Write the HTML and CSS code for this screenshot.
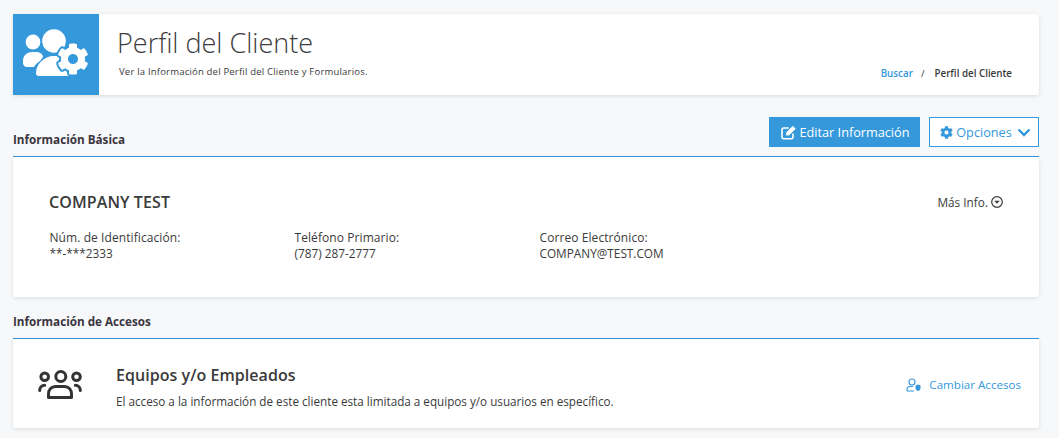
FILE: index.html
```html
<!DOCTYPE html>
<html lang="es">
<head>
<meta charset="utf-8">
<title>Perfil del Cliente</title>
<link rel="stylesheet" href="styles.css">
</head>
<body>
<svg class="defs" width="0" height="0" aria-hidden="true"><defs>
<path id="cog" d="M487.4 315.7l-42.6-24.6c4.3-23.2 4.3-47 0-70.2l42.6-24.6c4.9-2.8 7.1-8.6 5.5-14-11.1-35.6-30-67.8-54.7-94.6-3.8-4.1-10-5.1-14.8-2.3L380.8 110c-17.9-15.4-38.5-27.3-60.8-35.1V25.8c0-5.6-3.9-10.5-9.4-11.7-36.7-8.2-74.3-7.8-109.2 0-5.5 1.2-9.4 6.1-9.4 11.7V75c-22.2 7.9-42.8 19.8-60.8 35.1L88.7 85.5c-4.9-2.8-11-1.9-14.8 2.3-24.7 26.7-43.6 58.9-54.7 94.6-1.7 5.4.6 11.2 5.5 14L67.3 221c-4.3 23.2-4.3 47 0 70.2l-42.6 24.6c-4.9 2.8-7.1 8.6-5.5 14 11.1 35.6 30 67.8 54.7 94.6 3.8 4.1 10 5.1 14.8 2.3l42.6-24.6c17.9 15.4 38.5 27.3 60.8 35.1v49.2c0 5.6 3.9 10.5 9.4 11.7 36.7 8.2 74.3 7.8 109.2 0 5.5-1.2 9.4-6.1 9.4-11.7v-49.2c22.2-7.9 42.8-19.8 60.8-35.1l42.6 24.6c4.9 2.8 11 1.9 14.8-2.3 24.7-26.7 43.6-58.9 54.7-94.6 1.5-5.5-.7-11.3-5.6-14.1zM256 336c-44.1 0-80-35.9-80-80s35.9-80 80-80 80 35.9 80 80-35.9 80-80 80z"/>
</defs></svg>

<header class="page-head">
  <div class="head-icon">
    <svg width="86" height="81" viewBox="0 0 86 81">
      <circle cx="20" cy="28" r="7.4" fill="#fff"/>
      <path d="M10 47c0-5.500 4-9 9-9h3c5 0 8 2 8 5l-3 4c-3 2-5 4-6 6h-7c-2.500 0-4-2-4-4z" fill="#fff"/>
      <circle cx="41" cy="27" r="11.800" fill="#fff"/>
      <path d="M23 59c0-9 8-17 18-17h5c6 0 10 3 10 8v12H26c-2 0-3-1-3-3z" fill="#fff"/>
      <g transform="translate(60 45) scale(.0625) translate(-256 -256)">
        <use href="#cog" fill="#3498db" stroke="#3498db" stroke-width="64" stroke-linejoin="round"/>
        <use href="#cog" fill="#fff"/>
      </g>
    </svg>
  </div>
  <div class="head-text">
    <h1 class="head-title">Perfil del Cliente</h1>
    <p class="head-sub">Ver la Información del Perfil del Cliente y Formularios.</p>
  </div>
  <nav class="crumbs">
    <a class="crumb-link">Buscar</a>
    <span class="crumb-sep">/</span>
    <span class="crumb-current">Perfil del Cliente</span>
  </nav>
</header>

<section class="basic">
  <div class="section-head">
    <h2 class="section-title">Información Básica</h2>
    <div class="actions">
      <button class="btn btn-solid">
        <svg width="16" height="15" viewBox="0 0 16 15" fill="none" stroke="currentColor" stroke-width="1.6"><path d="M12 8.500v3.700c0 1-.7 1.600-1.600 1.600H2.600C1.700 13.800 1 13.200 1 12.200V4.600C1 3.700 1.700 3 2.600 3h5.200"/><path d="M5.800 7.400 11.800 1.400 14.200 3.800 8.200 9.800 5.500 10.200z" fill="currentColor" stroke-width="1"/></svg>
        Editar Información
      </button>
      <button class="btn btn-outline">
        <svg width="13" height="13" viewBox="0 0 512 512"><use href="#cog" fill="currentColor"/></svg>
        Opciones
        <svg class="chev" width="14" height="9" viewBox="0 0 14 9" fill="none" stroke="currentColor" stroke-width="2.400"><path d="M1.500 1.500 7 7l5.500-5.500"/></svg>
      </button>
    </div>
  </div>
  <div class="card card-info">
    <div class="info-top">
      <h3 class="company">COMPANY TEST</h3>
      <a class="more">Más Info.
        <svg width="12" height="12" viewBox="0 0 12 12"><circle cx="6" cy="6" r="5.300" fill="none" stroke="currentColor" stroke-width="1.200"/><path d="M3.300 4.800h5.400L6 7.800z" fill="currentColor"/></svg>
      </a>
    </div>
    <dl class="fields">
      <div class="field"><dt>Núm. de Identificación:</dt><dd>**-***2333</dd></div>
      <div class="field"><dt>Teléfono Primario:</dt><dd>(787) 287-2777</dd></div>
      <div class="field"><dt>Correo Electrónico:</dt><dd>COMPANY@TEST.COM</dd></div>
    </dl>
  </div>
</section>

<section class="access">
  <div class="section-head section-head-plain">
    <h2 class="section-title">Información de Accesos</h2>
  </div>
  <div class="card card-access">
    <svg class="team" width="44" height="30" viewBox="0 0 44 30" fill="none" stroke="#333" stroke-width="3" stroke-linecap="round" stroke-linejoin="round">
      <circle cx="22.800" cy="6.500" r="5"/>
      <circle cx="6.700" cy="6.700" r="3.800"/>
      <circle cx="38.500" cy="6.700" r="3.800"/>
      <path d="M1.700 20.500c0-3 2-5.200 5-5.200"/>
      <path d="M42.300 20.500c0-3-2-5.200-5-5.200"/>
      <path d="M10.500 27.500h23v-3c0-5-3-8-7-8h-9c-4 0-7 3-7 8z"/>
    </svg>
    <div class="access-text">
      <h3 class="access-title">Equipos y/o Empleados</h3>
      <p class="access-desc">El acceso a la información de este cliente esta limitada a equipos y/o usuarios en específico.</p>
    </div>
    <a class="change">
      <svg width="15" height="14" viewBox="0 0 15 14" fill="none" stroke="currentColor" stroke-width="1.100"><circle cx="6" cy="4" r="3"/><path d="M1 13v-1.500C1 9.500 2.500 8.500 4 8.500h3M1 13h7"/><path d="M9.500 7.500l2.500-1 2.500 1v2.500c0 1.500-1.200 2.600-2.500 3-1.300-.4-2.500-1.500-2.500-3z" fill="currentColor" stroke="none"/></svg>
      Cambiar Accesos
    </a>
  </div>
</section>
</body>
</html>
```
FILE: styles.css
```css
* { box-sizing: border-box; }
html, body { margin: 0; padding: 0; }
body {
  height: 438px;
  overflow: hidden;
  padding: 14px 20px 0 13px;
  background: #f7f8fa;
  color: #3a3a3a;
  font-family: "Open Sans", sans-serif;
  font-size: 12px;
  line-height: 16px;
}
.defs { position: absolute; }
h1, h2, h3, p, dl, dd { margin: 0; }

.page-head {
  display: flex;
  height: 81px;
  background: #fff;
  border-radius: 2px;
  box-shadow: 0 1px 4px rgba(0, 0, 0, .12);
}
.head-icon { width: 86px; height: 81px; background: #3498db; }
.head-icon svg { display: block; }
.head-text { flex: 1; padding: 10px 0 0 18px; }
.head-title { font-size: 27px; line-height: 38px; font-weight: 300; color: #3d3d3d; }
.head-sub { margin-top: 3px; margin-left: 2px; font-size: 9.500px; line-height: 14px; letter-spacing: .2px; }
.crumbs {
  display: flex;
  align-self: flex-end;
  gap: 8px;
  padding: 0 27px 14px 0;
  font-size: 9.800px;
  line-height: 14px;
  font-weight: 600;
}
.crumb-link { color: #3498db; }
.crumb-sep { font-weight: 400; margin-right: 2px; }

.section-head {
  display: flex;
  justify-content: space-between;
  align-items: flex-end;
  height: 62px;
  padding-bottom: 9px;
  border-bottom: 1px solid #3498db;
}
.section-head-plain { height: 42px; }
.section-title { font-size: 11.700px; line-height: 16px; font-weight: 700; color: #3a3540; }
.actions { display: flex; gap: 9px; }
.btn {
  display: flex;
  align-items: center;
  justify-content: center;
  gap: 3px;
  height: 30px;
  font-family: inherit;
  font-size: 12.700px;
  border: 1px solid #3498db;
  border-radius: 0;
  padding: 0;
}
.btn-solid { width: 151px; background: #3498db; color: #fff; padding-left: 1px; }
.btn-outline { width: 110px; background: #fff; color: #3498db; padding-left: 3px; }
.chev { margin-left: 2px; }

.card {
  background: #fff;
  border-radius: 2px;
  box-shadow: 0 1px 4px rgba(0, 0, 0, .12);
}
.card-info { height: 140px; padding: 34px 36px 0; }
.info-top { display: flex; justify-content: space-between; align-items: center; }
.company { font-size: 16px; line-height: 22px; font-weight: 540; letter-spacing: .1px; }
.more { display: flex; align-items: center; gap: 3px; font-size: 11.800px; }
.fields { display: flex; margin: 18px 0 0 .5px; }
.field { width: 245px; }
dt { font-weight: 400; line-height: 14px; letter-spacing: .08px; }
dd { font-size: 11.800px; }

.card-access { display: flex; align-items: center; height: 89px; padding: 0 18px 0 25px; }
.team { margin: 3px 34px 0 0; flex: none; }
.access-text { flex: 1; padding-top: 6px; }
.access-title { font-size: 16px; line-height: 22px; font-weight: 540; letter-spacing: .05px; }
.access-desc { margin-top: 7px; font-size: 11.700px; line-height: 16px; }
.change { display: flex; align-items: center; gap: 8px; color: #3498db; font-size: 11.600px; margin-top: 2px; }
```
